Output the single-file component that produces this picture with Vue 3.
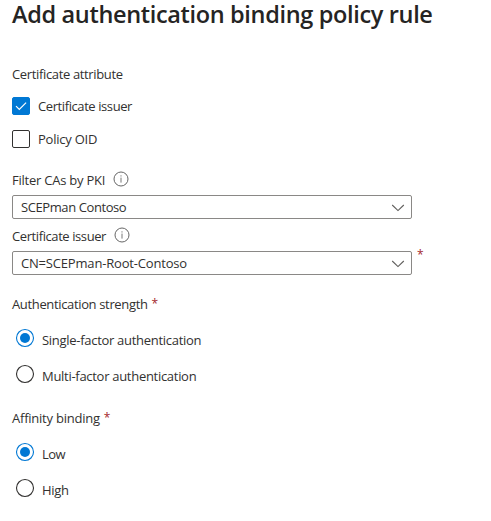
<script setup>
import { ref } from 'vue'

const attributes = ref([
  { label: 'Certificate issuer', checked: true, cls: 't-issuer' },
  { label: 'Policy OID', checked: false, cls: 't-oid' },
])
const selects = [
  { label: 'Filter CAs by PKI', value: 'SCEPman Contoso', required: false, cls: 't-filter', valueCls: 't-scep' },
  { label: 'Certificate issuer', value: 'CN=SCEPman-Root-Contoso', required: true, cls: 't-issuer', valueCls: 't-root' },
]
const groups = [
  {
    label: 'Authentication strength',
    cls: 't-strength',
    options: [
      { label: 'Single-factor authentication', selected: true, cls: 't-single' },
      { label: 'Multi-factor authentication', selected: false, cls: 't-multi' },
    ],
  },
  {
    label: 'Affinity binding',
    cls: 't-affinity',
    options: [
      { label: 'Low', selected: true, cls: 't-low' },
      { label: 'High', selected: false, cls: 't-high' },
    ],
  },
]
</script>

<template>
  <main class="panel">
    <h1>Add authentication binding policy rule</h1>

    <section class="attributes">
      <div class="label"><span class="t-attribute">Certificate attribute</span></div>
      <div v-for="a in attributes" :key="a.label" class="check-row" role="checkbox" :aria-checked="a.checked">
        <span class="box" :class="{ checked: a.checked }">
          <svg v-if="a.checked" width="16" height="16" viewBox="0 0 16 16">
            <path d="M3 8.2 6.3 11.5 13.1 4.7" fill="none" stroke="#fff" stroke-width="1.2" />
          </svg>
        </span>
        <span :class="a.cls">{{ a.label }}</span>
      </div>
    </section>

    <section class="selects">
      <div v-for="s in selects" :key="s.label" class="field">
        <div class="field-label">
          <span :class="s.cls">{{ s.label }}</span>
          <svg class="info" width="16" height="16" viewBox="0 0 16 16">
            <circle cx="8" cy="8" r="7" fill="none" stroke="#666" stroke-width="1" />
            <path d="M8 6.6V11.6M8 4.3V5.5" fill="none" stroke="#777" stroke-width="1" />
          </svg>
        </div>
        <div class="field-row">
          <div class="select">
            <span :class="s.valueCls">{{ s.value }}</span>
            <svg width="14" height="8" viewBox="0 0 14 8">
              <path d="M1.2 1 7 6.6 12.8 1" fill="none" stroke="#605e5c" stroke-width="1.1" />
            </svg>
          </div>
          <span v-if="s.required" class="star">*</span>
        </div>
      </div>
    </section>

    <section v-for="g in groups" :key="g.label" class="group">
      <div class="label"><span :class="g.cls">{{ g.label }}</span><span class="star">*</span></div>
      <div v-for="o in g.options" :key="o.label" class="radio-row" role="radio" :aria-checked="o.selected">
        <svg width="20" height="20" viewBox="0 0 20 20">
          <circle cx="10" cy="10" r="8.5" fill="#fff" :stroke="o.selected ? '#0078d4' : '#323130'" stroke-width="1.1" />
          <circle v-if="o.selected" cx="10" cy="10" r="5" fill="#0078d4" />
        </svg>
        <span :class="o.cls">{{ o.label }}</span>
      </div>
    </section>
  </main>
</template>

<style>
body {
  margin: 0;
  background: #fff;
}
</style>

<style scoped>
.panel {
  box-sizing: border-box;
  width: 491px;
  height: 521px;
  padding-left: 12px;
  font: 13px/18px "Open Sans", "Noto Sans", sans-serif;
  color: #323130;
  white-space: nowrap;
}
h1 {
  margin: 0;
  padding-top: 1px;
  font-size: 23.5px;
  line-height: 27px;
  font-weight: 600;
  letter-spacing: -0.34px;
  color: #252423;
}
.label,
.field-label {
  display: flex;
  height: 18px;
}
.attributes {
  padding-top: 37px;
}
.check-row {
  display: flex;
  gap: 8px;
  height: 18px;
  margin-top: 15px;
}
.attributes .label + .check-row {
  margin-top: 14px;
}
.box {
  box-sizing: border-box;
  width: 18px;
  height: 18px;
  border: 1px solid #323130;
  border-radius: 2px;
}
.box.checked {
  background: #0078d4;
  border-color: #0078d4;
}
.box svg {
  display: block;
}
.selects {
  padding-top: 23px;
}
.field {
  height: 56px;
}
.field-label {
  gap: 8px;
  height: 24px;
}
.info {
  flex: none;
  margin-top: -0.5px;
}
.field-row {
  display: flex;
  gap: 5px;
}
.select {
  box-sizing: border-box;
  display: flex;
  align-items: center;
  justify-content: space-between;
  width: 400px;
  height: 24px;
  padding: 0 6px 0 8px;
  border: 1px solid #8a8886;
  border-radius: 2px;
}
.select svg {
  margin-top: 2px;
}
.star {
  font-size: 12px;
  color: #a4262c;
}
.field-row .star {
  line-height: 8px;
}
.label .star {
  margin-left: 4px;
}
.group {
  height: 114px;
  padding-top: 12px;
  box-sizing: border-box;
}
.radio-row {
  display: flex;
  gap: 7px;
  height: 20px;
  padding-left: 3px;
  margin-top: 16px;
}
.group .label + .radio-row {
  margin-top: 15px;
}
.radio-row span {
  padding-top: 3px;
}
.t-attribute,
.t-strength,
.t-high {
  letter-spacing: -0.35px;
}
.t-issuer,
.t-scep {
  letter-spacing: -0.41px;
}
.t-low {
  letter-spacing: -0.6px;
}
.t-single,
.t-multi {
  letter-spacing: -0.29px;
}
.t-oid,
.t-filter,
.t-affinity {
  letter-spacing: -0.23px;
}
.t-root {
  letter-spacing: -0.18px;
}
</style>
